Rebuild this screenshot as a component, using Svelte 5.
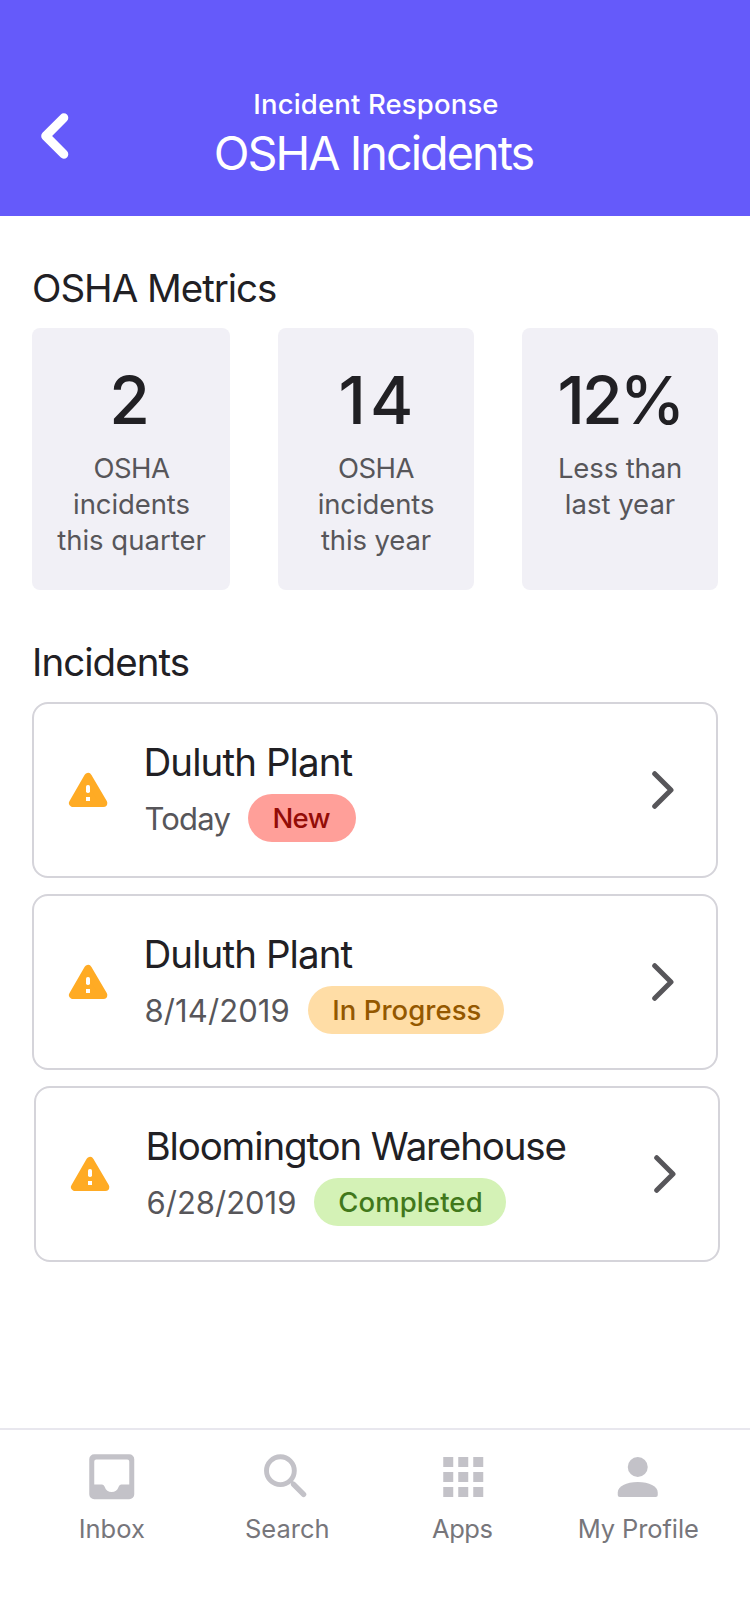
<script>
  const metrics = [
    { value: '2', spacing: 0, lines: [['OSHA', -0.55], ['incidents', -0.1], ['this quarter', 0]] },
    { value: '14', spacing: 4.1, lines: [['OSHA', -0.55], ['incidents', -0.1], ['this year', -0.13]] },
    { value: '12%', spacing: -2.9, lines: [['Less than', -0.13], ['last year', 0]] }
  ];

  const incidents = [
    { place: 'Duluth Plant', placeSpacing: -0.92, date: 'Today', dateSpacing: -0.78, status: 'New', tone: 'new', width: 108, spacing: -0.6 },
    { place: 'Duluth Plant', placeSpacing: -0.92, date: '8/14/2019', dateSpacing: 0.1, status: 'In Progress', tone: 'progress', width: 196, spacing: 0.05 },
    { place: 'Bloomington Warehouse', placeSpacing: -1.14, date: '6/28/2019', dateSpacing: 0, status: 'Completed', tone: 'done', width: 192, spacing: 0.12 }
  ];
</script>

<div class="screen">
  <header>
    <button class="back" aria-label="Back">
      <svg width="30" height="48" viewBox="0 0 30 48">
        <path d="M23.8 5.8 5.7 24l18.1 18.2" fill="none" stroke="#fff" stroke-width="9" stroke-linecap="round" stroke-linejoin="round" />
      </svg>
    </button>
    <div class="titles">
      <p>Incident Response</p>
      <h1>OSHA Incidents</h1>
    </div>
  </header>

  <main>
    <h2 class="metrics-title">OSHA Metrics</h2>
    <section class="metrics">
      {#each metrics as m}
        <article class="metric">
          <strong style="letter-spacing: {m.spacing}px">{m.value}</strong>
          <div class="label">
            {#each m.lines as [text, spacing]}
              <span style="letter-spacing: {spacing}px">{text}</span>
            {/each}
          </div>
        </article>
      {/each}
    </section>

    <h2 class="list-title">Incidents</h2>
    <section class="list">
      {#each incidents as item}
        <article class="incident {item.tone}">
          <svg class="alert" width="40" height="36" viewBox="0 0 40 36">
            <path d="M20 5 5 31h30.300z" fill="#ffab24" stroke="#ffab24" stroke-width="8" stroke-linejoin="round" />
            <rect x="18" y="13" width="4" height="8" rx="1.8" fill="#fff" />
            <rect x="18" y="25" width="4" height="4" fill="#fff" />
          </svg>
          <div class="body">
            <h3 style="letter-spacing: {item.placeSpacing}px">{item.place}</h3>
            <div class="meta">
              <span class="date" style="letter-spacing: {item.dateSpacing}px">{item.date}</span>
              <span class="badge" style="width: {item.width}px; letter-spacing: {item.spacing}px">{item.status}</span>
            </div>
          </div>
          <svg class="chevron" width="24" height="40" viewBox="0 0 24 40">
            <path d="M4.700 3.700 21 20 4.700 36.300" fill="none" stroke="#57565a" stroke-width="5" stroke-linecap="round" stroke-linejoin="round" />
          </svg>
        </article>
      {/each}
    </section>
  </main>

  <nav>
    <div class="tab">
      <svg width="60" height="60" viewBox="0 0 60 60">
        <path fill-rule="evenodd" d="M12.250 7.300h35a5 5 0 0 1 5 5v35a5 5 0 0 1-5 5h-35a5 5 0 0 1-5-5v-35a5 5 0 0 1 5-5zM14.250 12.500a2 2 0 0 0-2 2v22.900h7.600c1.500 0 2.300.9 2.900 2.500 1.100 3.300 3.600 5.200 6.900 5.200s5.800-1.900 6.900-5.200c.6-1.600 1.400-2.500 2.900-2.500h7.800V14.500a2 2 0 0 0-2-2z" />
      </svg>
      <span>Inbox</span>
    </div>
    <div class="tab">
      <svg width="60" height="60" viewBox="0 0 60 60">
        <circle cx="23.4" cy="23.7" r="13.9" fill="none" stroke="#c3c2c8" stroke-width="4.9" />
        <path d="m36.600 37.300 10 10" stroke="#c3c2c8" stroke-width="5.400" stroke-linecap="round" />
        <path d="m33 33.300 4 4" stroke="#c3c2c8" stroke-width="3" />
      </svg>
      <span>Search</span>
    </div>
    <div class="tab">
      <svg width="60" height="60" viewBox="0 0 60 60">
        {#each [10, 25, 40] as y}
          {#each [10.25, 25.25, 40.25] as x}
            <rect {x} {y} width="10" height="10" />
          {/each}
        {/each}
      </svg>
      <span class="apps">Apps</span>
    </div>
    <div class="tab">
      <svg width="60" height="60" viewBox="0 0 60 60">
        <circle cx="29.75" cy="20" r="10" />
        <path d="M9.750 45.500c0-6.300 8.500-10.500 20-10.500s20 4.200 20 10.500v2.500a2 2 0 0 1-2 2h-36a2 2 0 0 1-2-2z" />
      </svg>
      <span class="profile">My Profile</span>
    </div>
  </nav>
</div>

<style>
  :global(body) { margin: 0; background: #fff; }
  .screen {
    display: flex;
    flex-direction: column;
    width: 750px;
    height: 1624px;
    overflow: hidden;
    background: #fff;
    color: #212024;
    font-family: Inter, "Noto Sans", sans-serif;
  }
  h1, h2, h3, p { margin: 0; font-weight: 400; }
  svg { display: block; flex: none; }
  header {
    display: grid;
    grid-template-columns: 110px 1fr 110px;
    height: 216px;
    flex: none;
    background: #655afa;
    color: #fff;
  }
  .back {
    display: flex;
    align-items: flex-start;
    padding: 112px 0 0 40px;
    border: 0;
    background: none;
  }
  .titles {
    display: flex;
    flex-direction: column;
    align-items: center;
    gap: 4px;
    padding-top: 87px;
    white-space: nowrap;
  }
  .titles p { margin-left: 2px; font-size: 27.5px; line-height: 34px; font-weight: 450; letter-spacing: 0.15px; }
  h1 { margin-right: 3px; font-size: 46.75px; line-height: 56px; letter-spacing: -1.98px; }
  main { flex: 1; padding: 48px 32px 0; }
  h2 { font-size: 38.5px; line-height: 48px; }
  .metrics-title { letter-spacing: -1.03px; }
  .list-title { letter-spacing: -0.95px; }
  .metrics {
    display: grid;
    grid-template-columns: 198px 196px 196px;
    gap: 48px;
    margin: 16px 0 48px;
  }
  .metric {
    display: flex;
    flex-direction: column;
    align-items: center;
    gap: 10px;
    padding: 32px 0;
    border-radius: 8px;
    background: #f1f0f6;
  }
  .metric strong { font-size: 66px; line-height: 80px; font-weight: 550; }
  .metric:nth-child(1) strong { margin-right: 3px; }
  .metric:nth-child(2) strong { margin-left: 4px; }
  .metric:nth-child(1) .label { margin-left: 1px; }
  .label {
    display: flex;
    flex-direction: column;
    align-items: center;
    color: #57565a;
    font-size: 27.5px;
    line-height: 36px;
    white-space: nowrap;
  }
  .list { display: flex; flex-direction: column; gap: 16px; margin-top: 16px; }
  .incident {
    display: flex;
    align-items: flex-start;
    box-sizing: border-box;
    height: 176px;
    padding: 34px;
    border: 2px solid #d5d4da;
    border-radius: 16px;
  }
  .incident.done { margin: 0 -2px 0 2px; }
  .alert { margin: 34px 35.5px 0 0; }
  .body { flex: 1; white-space: nowrap; }
  h3 { font-size: 38.5px; line-height: 48px; }
  .meta { display: flex; align-items: center; gap: 18px; margin-top: 8px; padding-left: 1px; }
  .date { color: #57565a; font-size: 31px; line-height: 50px; height: 48px; }
  .badge {
    height: 48px;
    border-radius: 24px;
    font-size: 27.5px;
    line-height: 48px;
    font-weight: 500;
    text-align: center;
  }
  .badge { box-sizing: border-box; }
  .new .badge { padding-right: 2px; background: #ff9f99; color: #930c07; }
  .progress .badge { padding-left: 2px; background: #ffdda6; color: #945800; }
  .done .badge { background: #d4f2b6; color: #41781b; }
  .chevron { margin: 32px 8px 0 0; }
  nav {
    display: grid;
    grid-template-columns: repeat(4, 1fr);
    box-sizing: border-box;
    height: 196px;
    padding: 17px 24px 0;
    border-top: 2px solid #e8e7ee;
    flex: none;
  }
  .tab {
    display: flex;
    flex-direction: column;
    align-items: center;
    gap: 7px;
    color: #77767b;
    font-size: 25.5px;
    line-height: 30px;
  }
  .tab svg { fill: #c3c2c8; }
  .apps { margin-right: 1px; letter-spacing: -0.5px; }
  .profile { letter-spacing: -0.1px; }
</style>
